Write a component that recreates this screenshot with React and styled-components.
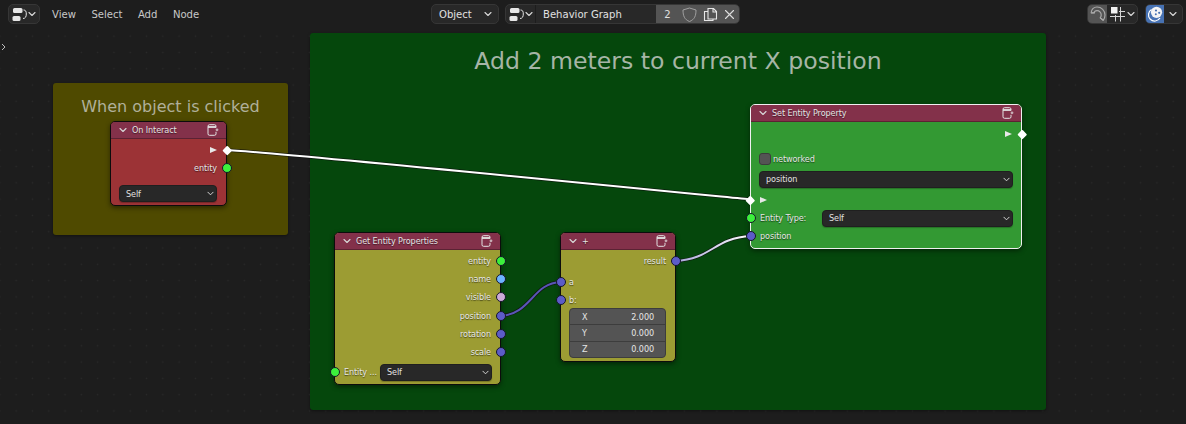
import React from 'react';
import styled, { createGlobalStyle } from 'styled-components';

const Global = createGlobalStyle`
  html, body { margin: 0; padding: 0; background: #1d1d1d; }
  body { font-family: "DejaVu Sans Condensed", "DejaVu Sans", "Liberation Sans", sans-serif; }
`;
const Page = styled.div`
  width: 1186px; height: 424px; display: flex; flex-direction: column; overflow: hidden;
  background: #1d1d1d; color: #d9d9d9; font-size: 11.2px;
`;
const Toolbar = styled.header`
  height: 28px; flex: none; display: flex; align-items: center; padding: 0 2px 0 8px; box-sizing: border-box; background: #1d1d1d;
`;
const Group = styled.div`
  display: flex; align-items: center; height: 20px; margin-left: ${p => p.$ml || 0}px;
  background: #282828; border: 1px solid #363636; border-radius: 5px; box-sizing: border-box; overflow: hidden; flex: none;
`;
const Cell = styled.div`
  height: 100%; width: ${p => p.$w}px; display: flex; align-items: center; justify-content: ${p => p.$left ? 'space-between' : 'center'};
  padding: ${p => p.$left ? '0 6px 0 7px' : '0'}; box-sizing: border-box; flex: none; gap: 1px;
  background: ${p => p.$bg || 'transparent'}; color: #e0e0e0; font-size: 11.2px;
  border-left: ${p => p.$sep ? '1px solid #1d1d1d' : '0'};
`;
const Menu = styled.nav`
  display: flex; margin-left: 12px; gap: 15.5px; width: 379px; color: #c8c8c8; font-size: 11.2px;
`;
const Canvas = styled.main`
  position: relative; flex: 1;
  background-color: #1d1d1d;
  background-image: radial-gradient(circle, #2a2a2a 0.8px, transparent 1px);
  background-size: 16.3px 16.3px;
  background-position: 8px 0;
`;
const SideArrow = styled.svg`
  position: absolute; left: 1px; top: 15px;
`;
const Frame = styled.section`
  position: absolute; left: ${p => p.$x}px; top: ${p => p.$y}px; width: ${p => p.$w}px; height: ${p => p.$h}px;
  background: ${p => p.$bg}; border-radius: 3px; box-shadow: 0 1px 3px rgba(0,0,0,.4);
  text-align: center; color: ${p => p.$fg}; font-family: "DejaVu Sans", sans-serif; font-size: ${p => p.$fs}px; line-height: ${p => p.$fs + 4}px;
  padding-top: ${p => p.$pt}px; box-sizing: border-box;
`;
const Wires = styled.svg`
  position: absolute; left: 0; top: 0; width: 1186px; height: 396px; pointer-events: none;
`;
const Node = styled.article`
  position: absolute; left: ${p => p.$x}px; top: ${p => p.$y}px; width: ${p => p.$w}px; box-sizing: border-box;
  border: 1px solid ${p => p.$selected ? '#f0f0f0' : '#0c0c0c'}; border-radius: 5px; background: ${p => p.$bg};
  padding-bottom: ${p => p.$pb}px; box-shadow: 0 2px 5px rgba(0,0,0,.45);
`;
const NodeHeader = styled.div`
  height: 17px; background: #83314a; border-radius: 4px 4px 0 0; display: flex; align-items: center; padding: 0 7px 0 8px;
  color: #e4e4e4; font-size: 9px; letter-spacing: -0.1px; gap: 5px; margin-bottom: ${p => p.$mb}px; border-bottom: 1px solid rgba(0,0,0,.3);
  text-shadow: 0 1px 1px rgba(0,0,0,.5); box-sizing: border-box;
`;
const HeaderTitle = styled.span`flex: 1; white-space: nowrap;`;
const Row = styled.div`
  position: relative; height: ${p => p.$h || 18}px; display: flex; align-items: center;
  justify-content: ${p => p.$out ? 'flex-end' : 'flex-start'};
  padding: 0 ${p => p.$pr ?? 9}px 0 ${p => p.$pl ?? 8}px; gap: ${p => p.$gap ?? 6}px; margin-top: ${p => p.$mt || 0}px;
  color: #e6e6e6; font-size: 9px; letter-spacing: -0.1px; text-shadow: 0 1px 1px rgba(0,0,0,.55); white-space: nowrap;
`;
const Label = styled.span`
  width: ${p => p.$w}px; flex: none;
`;
const Socket = styled.i`
  position: absolute; ${p => p.$out ? 'right: -5.5px;' : 'left: -5.5px;'} top: 50%; margin-top: -5px;
  width: 10px; height: 10px; box-sizing: border-box; border-radius: 50%; background: ${p => p.$c};
  border: 1px solid #15152a;
`;
const Exec = styled.i`
  position: absolute; ${p => p.$out ? 'right: -4px;' : 'left: -4px;'} top: 50%; margin-top: -3.25px;
  width: 6.5px; height: 6.5px; background: #fff; transform: rotate(45deg); border-radius: 1px;
`;
const Tri = styled.i`
  display: block; width: 0; height: 0; border-left: 7px solid #e8e8e8; border-top: 3.5px solid transparent; border-bottom: 3.5px solid transparent;
`;
const Select = styled.div`
  flex: ${p => p.$w ? 'none' : 1}; width: ${p => p.$w ? p.$w + 'px' : 'auto'}; height: 17px; background: #282828; border: 1px solid #1f1f1f; border-radius: 4px; box-sizing: border-box;
  display: flex; align-items: center; justify-content: space-between; padding: 0 2px 0 6px; color: #e2e2e2; font-size: 9px; text-shadow: none;
  box-shadow: 0 1px 1px rgba(0,0,0,.25);
`;
const Check = styled.i`
  display: block; width: 12px; height: 12px; border-radius: 3px; background: #545454; border: 1px solid #3c3c3c; box-sizing: border-box;
`;
const Vector = styled.div`
  margin: -1px 9px 0 8px; height: 50px; border-radius: 4px; background: #545454; border: 1px solid #3d3d3d; box-sizing: border-box; display: flex; flex-direction: column; overflow: hidden;
`;
const VectorRow = styled.div`
  flex: 1; display: flex; justify-content: space-between; align-items: center; padding: 0 11px 0 12px; font-size: 9px; letter-spacing: -0.1px; color: #e6e6e6;
  & + & { border-top: 1px solid #3d3d3d; }
`;

const Chev = ({ size = 8, c = '#d8d8d8' }) => (
  <svg width={size} height={size} viewBox="0 0 8 8" fill="none" stroke={c} strokeWidth="1.1" strokeLinecap="round" strokeLinejoin="round"><path d="M1 2.5 4 5.5 7 2.5" /></svg>
);
const NodeEditorIcon = () => (
  <svg width="15" height="15" viewBox="0 0 15 15" fill="none">
    <rect x="1" y="1" width="9.500" height="5" rx="1.500" fill="#e6e6e6" />
    <rect x="0.500" y="9" width="8" height="5" rx="1.500" fill="#e6e6e6" />
    <path d="M11.500 3c2.300 0 2.800 1.500 2.800 4s-.8 4.500-3.300 4.500" stroke="#e6e6e6" strokeWidth="1" />
  </svg>
);
const PreviewIcon = () => (
  <svg width="12" height="12" viewBox="0 0 12 12" fill="none" stroke="#e4e4e4" strokeWidth="1">
    <path d="M9 7.800v2a1.500 1.500 0 0 1-1.500 1.500H2.500A1.500 1.500 0 0 1 1 9.800V2.200A1.500 1.500 0 0 1 2.500.700h5A1.500 1.500 0 0 1 9 2.200v1.300" />
    <path d="M1 3h8" strokeWidth="1.800" />
    <circle cx="10" cy="5.800" r="1.400" fill="#e4e4e4" stroke="none" opacity=".7" />
  </svg>
);
const Shield = () => (
  <svg width="15" height="15" viewBox="0 0 15 15" fill="none" stroke="#a0a0a0" strokeWidth="1"><path d="M7.500 1 14 3c0 6-1.500 9.500-6.500 11.500C2.500 12.500 1 9 1 3z" /></svg>
);
const Copy = () => (
  <svg width="15" height="15" viewBox="0 0 15 15" fill="none" stroke="#e6e6e6" strokeWidth="1.100"><path d="M5 1.500h5.500l3 3v7.500H5zM10 1.500v3.500h3.500M5 4.500H1.500v9H10V12" /></svg>
);
const Close = () => (
  <svg width="11" height="11" viewBox="0 0 11 11" stroke="#dcdcdc" strokeWidth="1.100" strokeLinecap="round"><path d="M1.500 1.500l8 8M9.500 1.500l-8 8" /></svg>
);
const Magnet = () => (
  <svg width="16" height="16" viewBox="0 0 16 16" fill="none" stroke="#a8a8a8" strokeWidth="1.200" strokeLinejoin="round">
    <path d="M1.200 6.800C1.200 3.500 3.800 1 7 1c4.500 0 8 3.500 8 8 0 2-.7 3.800-1.800 5.300l-3-2.400c.7-.9 1-1.900 1-2.900 0-2.500-1.900-4.400-4.200-4.400-1.700 0-2.900 1-2.900 2.400z" />
    <path d="M1.300 6.800l3.800-.2M13.200 14.300l-3-2.400" />
  </svg>
);
const Snap = () => (
  <svg width="16" height="16" viewBox="0 0 16 16" fill="none" stroke="#d4d4d4" strokeWidth="1">
    <rect x="1" y="1" width="6.500" height="6.500" fill="#f0f0f0" stroke="none" />
    <path d="M0 10.500h15M10.500 1v14.500M5.500 9v6.500M9 5.500h6" />
  </svg>
);
const Overlay = () => (
  <svg width="16" height="16" viewBox="0 0 16 16" fill="none">
    <path d="M4.500 3.500a6.200 6.200 0 1 0 8.500 8.500" stroke="#fff" strokeWidth="1.200" />
    <circle cx="9.500" cy="6.300" r="5.600" fill="#f4f4f4" />
    <circle cx="9" cy="4.500" r="1.100" fill="#4772b3" /><circle cx="12.200" cy="6.800" r="1.100" fill="#4772b3" /><circle cx="8.800" cy="8.300" r="1" fill="#4772b3" />
  </svg>
);

const Dropdown = ({ w, children }) => <Select $w={w}><span>{children}</span><Chev size={7} /></Select>;

export default function App() {
  return (
    <Page>
      <Global />
      <Toolbar>
        <Group><Cell $w={30}><NodeEditorIcon /><Chev /></Cell></Group>
        <Menu><span>View</span><span>Select</span><span>Add</span><span>Node</span></Menu>
        <Group><Cell $w={66} $left>Object<Chev /></Cell></Group>
        <Group $ml={6}>
          <Cell $w={29}><NodeEditorIcon /><Chev /></Cell>
          <Cell $w={121} $left $sep>Behavior Graph</Cell>
          <Cell $w={23} $bg="#545454">2</Cell>
          <Cell $w={21} $bg="#545454"><Shield /></Cell>
          <Cell $w={20} $bg="#545454"><Copy /></Cell>
          <Cell $w={19} $bg="#545454"><Close /></Cell>
        </Group>
        <Group $ml={347}>
          <Cell $w={19} $bg="#545454"><Magnet /></Cell>
          <Cell $w={30}><Snap /><Chev /></Cell>
        </Group>
        <Group $ml={7}>
          <Cell $w={18} $bg="#4772b3"><Overlay /></Cell>
          <Cell $w={18}><Chev /></Cell>
        </Group>
      </Toolbar>
      <Canvas>
        <SideArrow width="6" height="8" viewBox="0 0 6 8" fill="none" stroke="#bbb" strokeWidth="1"><path d="M1 1l3 3-3 3" /></SideArrow>
        <Frame $x={53} $y={55} $w={235} $h={152} $bg="#4f4a00" $fg="#b0b09a" $fs={16} $pt={14}>When object is clicked</Frame>
        <Frame $x={310} $y={5} $w={736} $h={377} $bg="#05470c" $fg="#a6b5a6" $fs={23.6} $pt={15}>Add 2 meters to current X position</Frame>
        <Wires viewBox="0 28 1186 396" fill="none">
          <path d="M226 150C262 151 715 196 751 199.500" stroke="#0c0c0c" strokeWidth="3.500" opacity=".7" />
          <path d="M226 150C262 151 715 196 751 199.500" stroke="#fff" strokeWidth="2" />
          <path d="M500 316C532 314 532 283 561 282" stroke="#111" strokeWidth="3.500" opacity=".8" />
          <path d="M500 316C532 314 532 283 561 282" stroke="#5a55b8" strokeWidth="2" />
          <defs><linearGradient id="g1" x1="675" x2="751" y1="0" y2="0" gradientUnits="userSpaceOnUse"><stop offset="0" stopColor="#a9a6dc" /><stop offset="1" stopColor="#ffffff" /></linearGradient></defs>
          <path d="M675 261C713 259 713 238 751 236" stroke="#111" strokeWidth="3.500" opacity=".7" />
          <path d="M675 261C713 259 713 238 751 236" stroke="url(#g1)" strokeWidth="2" />
        </Wires>

        <Node $x={110} $y={93} $w={117} $bg="#9c3336" $pb={3}>
          <NodeHeader $mb={2}><Chev /><HeaderTitle>On Interact</HeaderTitle><PreviewIcon /></NodeHeader>
          <Row $out><Tri /><Exec $out /></Row>
          <Row $out>entity<Socket $out $c="#3cf03c" /></Row>
          <Row $mt={8} $h={17}><Dropdown>Self</Dropdown></Row>
        </Node>

        <Node $x={750} $y={76} $w={272} $bg="#339933" $selected $pb={3}>
          <NodeHeader $mb={3}><Chev /><HeaderTitle>Set Entity Property</HeaderTitle><PreviewIcon /></NodeHeader>
          <Row $out><Tri /><Exec $out /></Row>
          <Row $mt={7} $gap={2}><Check /><span>networked</span></Row>
          <Row $mt={2} $pr={8}><Dropdown>position</Dropdown></Row>
          <Row $mt={3} $pl={9}><Exec /><Tri /></Row>
          <Row $pl={9} $pr={8}>
            <Socket $c="#3cf03c" /><Label $w={56}>Entity Type:</Label>
            <Dropdown w={191}>Self</Dropdown>
          </Row>
          <Row $pl={9}><Socket $c="#5c5cc8" />position</Row>
        </Node>

        <Node $x={334} $y={204} $w={167} $bg="#9c9c33" $pb={3}>
          <NodeHeader $mb={2}><Chev /><HeaderTitle>Get Entity Properties</HeaderTitle><PreviewIcon /></NodeHeader>
          <Row $out $h={18.200}>entity<Socket $out $c="#3cf03c" /></Row>
          <Row $out $h={18.200}>name<Socket $out $c="#6cb4ff" /></Row>
          <Row $out $h={18.200}>visible<Socket $out $c="#ccaad8" /></Row>
          <Row $out $h={18.200}>position<Socket $out $c="#5c5cc8" /></Row>
          <Row $out $h={18.200}>rotation<Socket $out $c="#5c5cc8" /></Row>
          <Row $out $h={18.200}>scale<Socket $out $c="#5c5cc8" /></Row>
          <Row $mt={2} $pl={9} $pr={8} $gap={1}>
            <Socket $c="#3cf03c" /><Label $w={35}>Entity ...</Label>
            <Dropdown w={112}>Self</Dropdown>
          </Row>
        </Node>

        <Node $x={560} $y={204} $w={116} $bg="#9c9c33" $pb={3}>
          <NodeHeader $mb={2}><Chev /><HeaderTitle>+</HeaderTitle><PreviewIcon /></NodeHeader>
          <Row $out>result<Socket $out $c="#5c5cc8" /></Row>
          <Row $mt={3}>a<Socket $c="#5c5cc8" /></Row>
          <Row>b:<Socket $c="#5c5cc8" /></Row>
          <Vector>
            <VectorRow><span>X</span><span>2.000</span></VectorRow>
            <VectorRow><span>Y</span><span>0.000</span></VectorRow>
            <VectorRow><span>Z</span><span>0.000</span></VectorRow>
          </Vector>
        </Node>
      </Canvas>
    </Page>
  );
}
